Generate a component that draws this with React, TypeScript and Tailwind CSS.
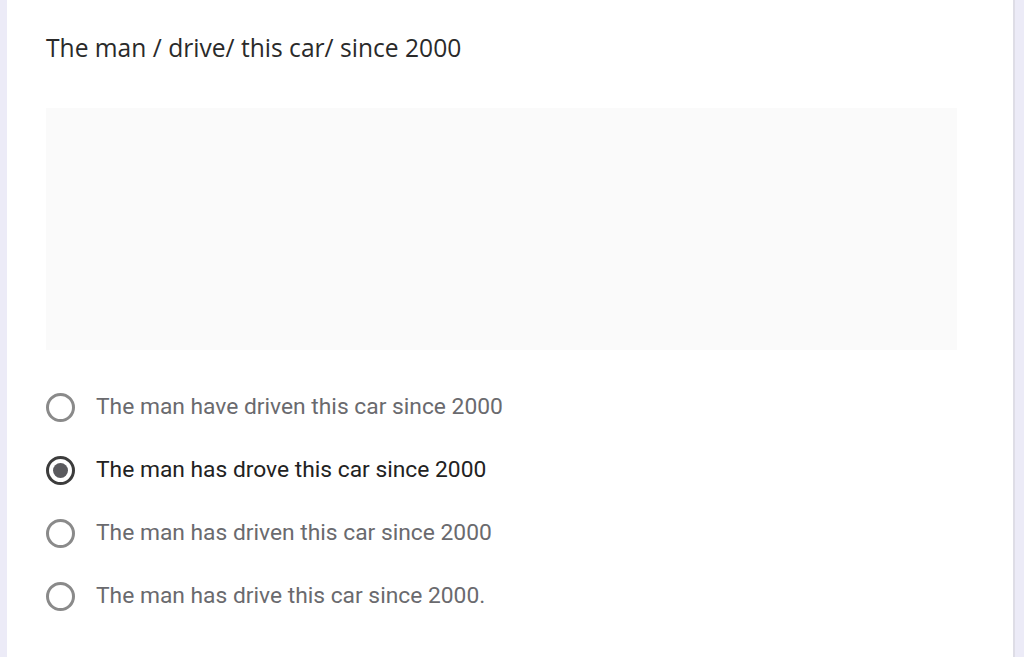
import React from 'react';

const options = [
  'The man have driven this car since 2000',
  'The man has drove this car since 2000',
  'The man has driven this car since 2000',
  'The man has drive this car since 2000.',
];

const selected = 1;

const Radio: React.FC<{ checked: boolean }> = ({ checked }) => (
  <div
    className={`w-[29px] h-[29px] rounded-full border-[3px] flex items-center justify-center shrink-0 ${
      checked ? 'border-[#3c3c3c]' : 'border-[#8a8a8a]'
    }`}
  >
    {checked && <div className="w-[15px] h-[15px] rounded-full bg-[#5a5a5e]" />}
  </div>
);

export default function App() {
  return (
    <div className="w-[1024px] h-[657px] bg-[#ecebf7] flex overflow-hidden" style={{ fontFamily: 'Roboto, sans-serif' }}>
      <div className="ml-[7px] w-[1008px] h-full bg-white border-r-2 border-[#dedde6] pl-[39px] pt-[33px]">
        <h1 className="text-[24.6px] leading-[30px] text-[#2a2a2a]" style={{ fontFamily: '"Open Sans", sans-serif' }}>
          The man / drive/ this car/ since 2000
        </h1>
        <div className="mt-[45px] w-[911px] h-[242px] bg-[#fafafa]" />
        <div className="mt-[43px] flex flex-col gap-[34px]">
          {options.map((o, i) => (
            <div key={o} className="flex items-center h-[29px]">
              <Radio checked={i === selected} />
              <span
                className={`ml-[21px] text-[22.8px] ${i === selected ? 'text-[#222222]' : 'text-[#6a6a6e]'}`}
              >
                {o}
              </span>
            </div>
          ))}
        </div>
      </div>
    </div>
  );
}
